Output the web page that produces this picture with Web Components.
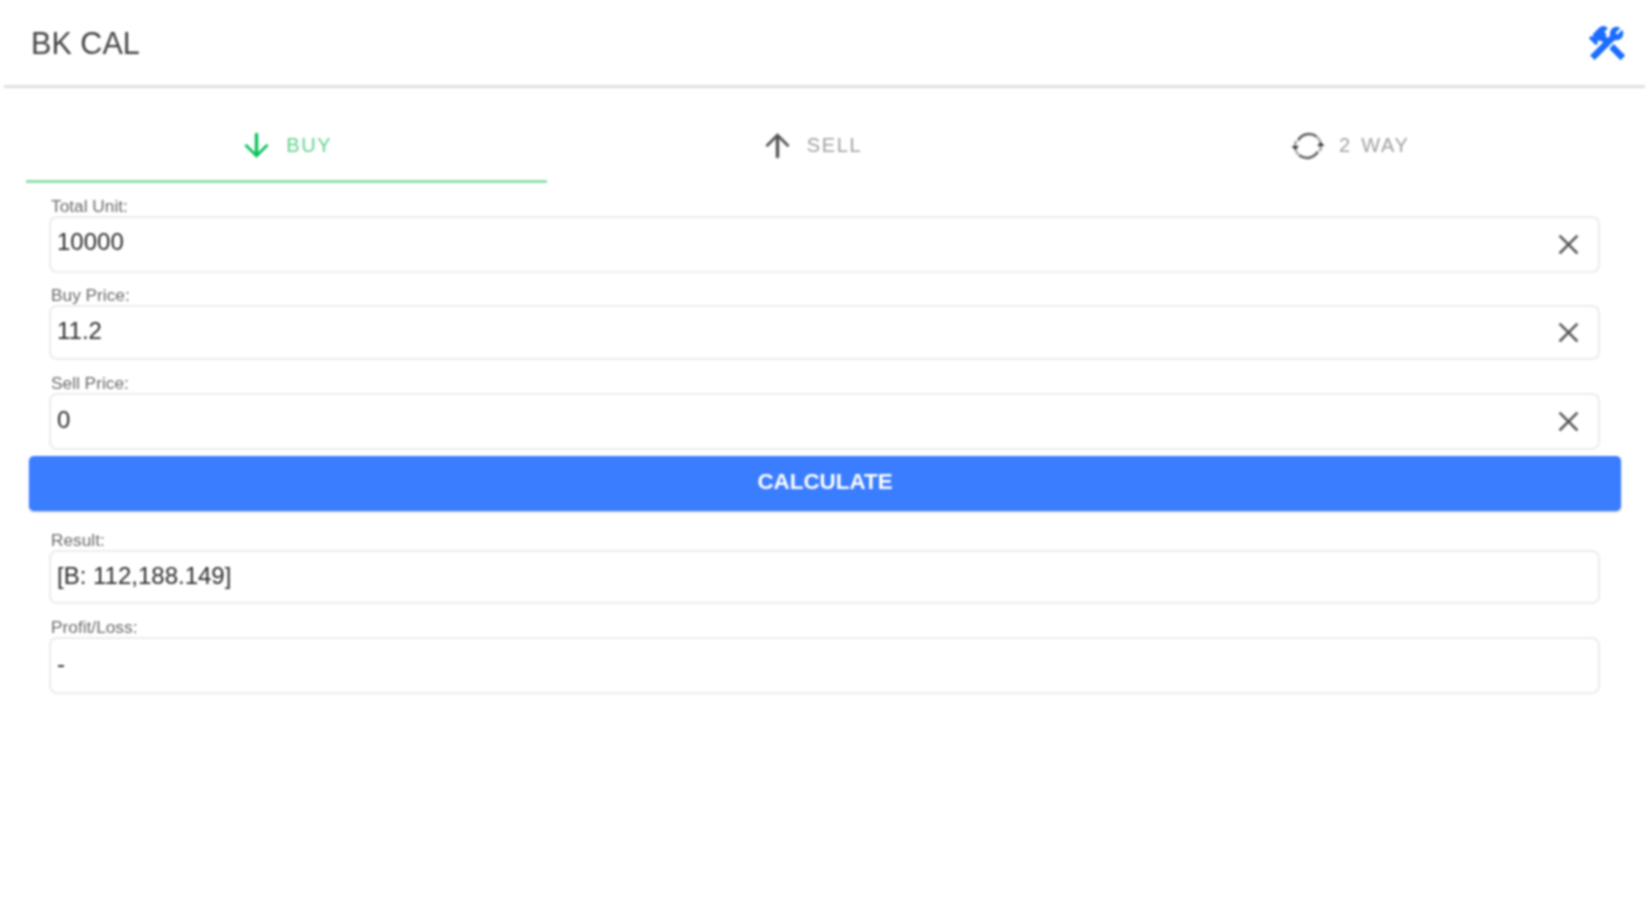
<!DOCTYPE html>
<html><head><meta charset="utf-8"><style>
html,body{margin:0;background:#fff;font-family:"Liberation Sans",Arial,sans-serif}
</style></head><body>
<bk-app></bk-app>
<script>
const I={
 tools:"M13.78 15.3L19.78 21.3L21.89 19.14L15.89 13.14L13.78 15.3M17.5 10.1C17.11 10.1 16.69 10.05 16.36 9.91L4.97 21.25L2.86 19.14L10.27 11.74L8.5 9.96L7.78 10.66L6.33 9.25V12.11L5.63 12.81L2.11 9.25L2.81 8.55H5.62L4.22 7.14L7.78 3.58C8.95 2.41 10.83 2.41 12 3.58L9.89 5.74L11.3 7.14L10.59 7.85L12.38 9.63L14.2 7.75C14.06 7.42 14 7 14 6.63C14 4.66 15.56 3.11 17.5 3.11C18.09 3.11 18.61 3.25 19.08 3.53L16.41 6.2L17.91 7.7L20.58 5.03C20.86 5.5 21 6 21 6.63C21 8.55 19.45 10.1 17.5 10.1Z",
 down:"M11,4H13V16.5L18.5,11L19.7,12.2L12,19.9L4.3,12.2L5.5,11L11,16.5V4Z",
 up:"M13,20H11V7.5L5.5,13L4.3,11.8L12,4.1L19.7,11.8L18.5,13L13,7.5V20Z",
 close:"M18.6,6.5L17.5,5.4L12,10.9L6.5,5.4L5.4,6.5L10.9,12L5.4,17.5L6.5,18.6L12,13.1L17.5,18.6L18.6,17.5L13.1,12L18.6,6.5Z"
};
const svg=(n,s,c,x='')=>`<svg width="${s}" height="${s}" viewBox="0 0 24 24" style="display:block;flex:none;${x}"><path fill="${c}" stroke="${c}" stroke-width="${n=='tools'?.7:.2}" d="${I[n]}"/></svg>`;
const ring=s=>`<svg width="${s}" height="${s}" viewBox="0 0 24 24" style="display:block;flex:none"><g fill="none" stroke="#5e5e5e" stroke-width="1.7"><path d="M5.4 8.2A8.6 8.6 0 0 1 17.9 5.8"/><path d="M18.6 15.8A8.6 8.6 0 0 1 6.1 18.2"/><path d="M3.4 12A8.6 8.6 0 0 1 4.1 8.7" stroke-opacity=".6"/><path d="M20.6 12A8.6 8.6 0 0 1 19.9 15.3" stroke-opacity=".6"/><path d="M18.2 6A8.6 8.6 0 0 1 20.4 10" stroke-opacity=".5"/><path d="M5.8 18A8.6 8.6 0 0 1 3.6 14" stroke-opacity=".5"/></g><path fill="#333" d="M18 12H23L20.5 9.4ZM1 12H6L3.5 14.6Z"/></svg>`;

class BkHeader extends HTMLElement{constructor(){super();this.attachShadow({mode:'open'}).innerHTML=`<style>
:host{display:flex;align-items:center;justify-content:space-between;height:85px;margin-left:3px;padding:0 18px 0 28px;box-sizing:border-box;background:#fff;box-shadow:0 4px 1px -1px #e2e2e2;position:relative}
span{font-size:30.5px;color:#444;line-height:1;letter-spacing:.05px;margin-top:1px}
</style><span><slot></slot></span>${svg('tools',42,'#1a6dff')}`}}

class BkTab extends HTMLElement{constructor(){super();const on=this.hasAttribute('active');const ic=this.getAttribute('icon');const col=on?'#0cc25c':'#555';const s=ic=='sync';
this.attachShadow({mode:'open'}).innerHTML=`<style>
:host{display:flex;align-items:center;justify-content:center;gap:${s?13:11}px;height:81px;padding:9px ${s?0:2}px 0 ${s?3:0}px;box-sizing:border-box;border-bottom:3px solid ${on?'#8fe0ae':'transparent'};font-size:20px;letter-spacing:1.6px;word-spacing:2.5px;color:${on?'#5fd38e':'#a0a0a0'}}
</style>${s?ring(36):svg(ic,37,col)}<span><slot></slot></span>`}}

class BkTabs extends HTMLElement{constructor(){super();this.attachShadow({mode:'open'}).innerHTML=`<style>
:host{display:grid;grid-template-columns:521fr 530fr 544fr;padding:0 26px;margin-top:17px}
</style><slot></slot>`}}

class BkField extends HTMLElement{constructor(){super();const cl=this.hasAttribute('clearable');
this.attachShadow({mode:'open'}).innerHTML=`<style>
:host{display:block;padding:0 46px 0 49px;margin-top:var(--top,0)}
label{display:block;font-size:17.3px;line-height:16px;color:#6a6a6a;padding-left:2px;height:18px}
.box{display:flex;align-items:center;justify-content:space-between;height:var(--h,54px);box-sizing:border-box;border:2px solid #ececec;border-radius:8px;padding:0 12px var(--pb,4px) 6px;font-size:24px;color:#2c2c2c;background:#fff}
svg{margin-bottom:calc(var(--pb,4px) * -1)}
</style><label>${this.getAttribute('label')}</label><div class="box"><span><slot></slot></span>${cl?svg('close',35,'#505050'):''}</div>`}}

class BkButton extends HTMLElement{constructor(){super();this.attachShadow({mode:'open'}).innerHTML=`<style>
:host{display:flex;align-items:center;justify-content:center;height:55px;margin:6px 25px 0 29px;box-sizing:border-box;padding-bottom:4px;background:#3b7dff;border-radius:5px;color:#fff;font-size:22.4px;font-weight:700;box-shadow:0 1px 2px rgba(30,70,200,.35)}
</style><slot></slot>`}}

class BkApp extends HTMLElement{constructor(){super();this.attachShadow({mode:'open'}).innerHTML=`<style>
:host{display:block;height:900px;overflow:hidden;filter:blur(.9px);background:#fff}
</style>
<bk-header>BK CAL</bk-header>
<bk-tabs><bk-tab icon="down" active>BUY</bk-tab><bk-tab icon="up">SELL</bk-tab><bk-tab icon="sync">2 WAY</bk-tab></bk-tabs>
<bk-field label="Total Unit:" clearable style="--top:15px;--h:57px;--pb:5px">10000</bk-field>
<bk-field label="Buy Price:" clearable style="--top:14px;--h:55px;--pb:3px">11.2</bk-field>
<bk-field label="Sell Price:" clearable style="--top:15px;--h:57px;--pb:4px">0</bk-field>
<bk-button>CALCULATE</bk-button>
<bk-field label="Result:" style="--top:21px;--h:54px;--pb:2px">[B: 112,188.149]</bk-field>
<bk-field label="Profit/Loss:" style="--top:15px;--h:57px;--pb:4px">-</bk-field>`}}

customElements.define('bk-header',BkHeader);
customElements.define('bk-tab',BkTab);
customElements.define('bk-tabs',BkTabs);
customElements.define('bk-field',BkField);
customElements.define('bk-button',BkButton);
customElements.define('bk-app',BkApp);
</script>
</body></html>
